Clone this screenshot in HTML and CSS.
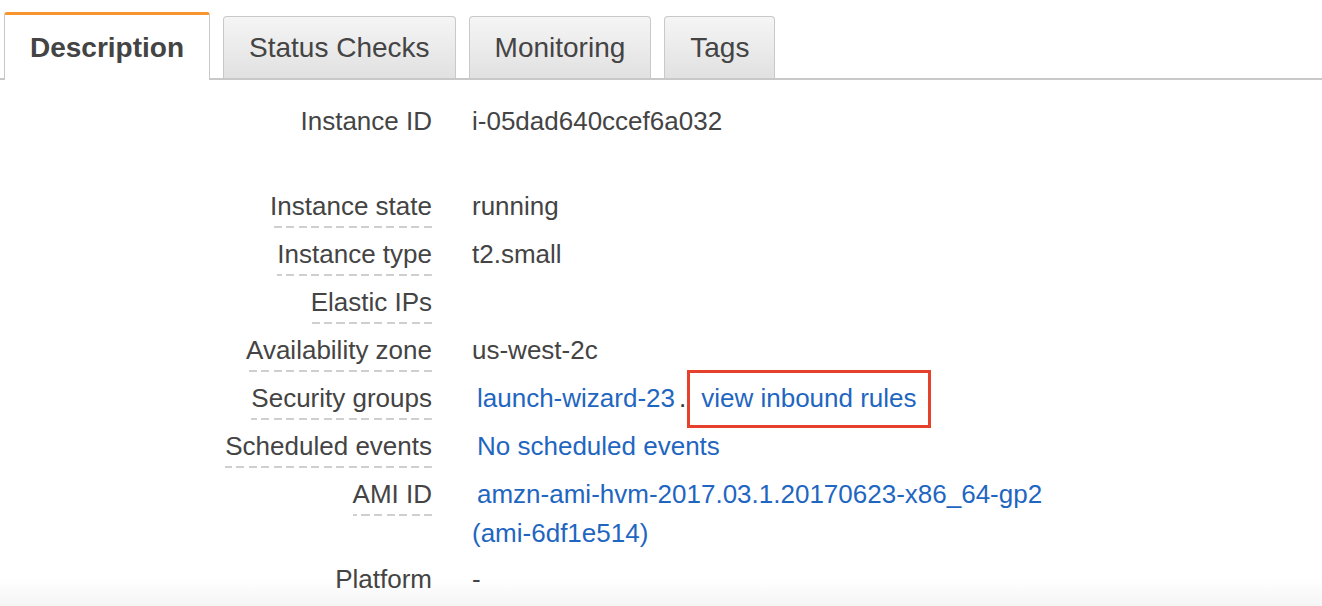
FILE: index.html
```html
<!DOCTYPE html>
<html lang="en">
<head>
  <meta charset="UTF-8" />
  <meta name="viewport" content="width=device-width, initial-scale=1.0"/>
  <title>Instance Description</title>
  <link rel="stylesheet" href="styles.css">
</head>
<body>
  <div class="tabs">
    <div class="tab active">Description</div>
    <div class="tab">Status Checks</div>
    <div class="tab">Monitoring</div>
    <div class="tab">Tags</div>
  </div>

  <div class="details">
    <div class="row first">
      <div class="label">Instance ID</div>
      <div class="value">i-05dad640ccef6a032</div>
    </div>
    <div class="row">
      <div class="label"><span class="tip">Instance state</span></div>
      <div class="value">running</div>
    </div>
    <div class="row">
      <div class="label"><span class="tip">Instance type</span></div>
      <div class="value">t2.small</div>
    </div>
    <div class="row">
      <div class="label"><span class="tip">Elastic IPs</span></div>
      <div class="value"></div>
    </div>
    <div class="row">
      <div class="label"><span class="tip">Availability zone</span></div>
      <div class="value">us-west-2c</div>
    </div>
    <div class="row">
      <div class="label"><span class="tip">Security groups</span></div>
      <div class="value indent"><a href="#">launch-wizard-23</a><span class="dot">.</span><span class="highlight"><a href="#">view inbound rules</a></span></div>
    </div>
    <div class="row">
      <div class="label"><span class="tip">Scheduled events</span></div>
      <div class="value indent"><a href="#">No scheduled events</a></div>
    </div>
    <div class="row">
      <div class="label"><span class="tip">AMI ID</span></div>
      <div class="value indent"><a href="#">amzn-ami-hvm-2017.03.1.20170623-x86_64-gp2<br>(ami-6df1e514)</a></div>
    </div>
    <div class="row">
      <div class="label">Platform</div>
      <div class="value">-</div>
    </div>
  </div>
</body>
</html>
```

FILE: styles.css
```css
html {
  height: 100%;
  background: linear-gradient(#fff 578px, #f5f5f5 606px) no-repeat;
}

body {
  margin: 0;
  font-family: "Liberation Sans", Arial, Helvetica, sans-serif;
  color: #444;
}

a {
  color: #1f66c1;
  text-decoration: none;
}

.tabs {
  display: flex;
  align-items: flex-end;
  gap: 13px;
  height: 78px;
  padding-left: 4px;
  border-bottom: 2px solid #c8c8c8;
}

.tab {
  font-size: 28px;
  line-height: 61px;
  padding: 0 25px;
  border: 1px solid #c9c9c9;
  border-bottom: none;
  border-radius: 4px 4px 0 0;
  background: linear-gradient(#f5f5f5, #e1e1e1);
  color: #444;
}

.tab.active {
  line-height: 65px;
  border-top: 3px solid #f7962f;
  border-radius: 3px 3px 0 0;
  background: #fff;
  font-weight: bold;
  margin-bottom: -2px;
}

.details {
  padding-top: 22px;
}

.row {
  display: grid;
  grid-template-columns: 432px 1fr;
  column-gap: 40px;
  font-size: 26px;
  line-height: 39px;
  margin-bottom: 7px;
}

.row.first { margin-bottom: 46px; }
.row:last-child { margin-bottom: 0; }

.label {
  text-align: right;
}

/* dashed underline, dashes start from the right edge */
.tip {
  display: inline-block;
  padding-bottom: 2px;
  background: repeating-linear-gradient(to left, #cfcfcf 0 8px, transparent 8px 12.5px) bottom / 100% 2px no-repeat;
}

.value.indent {
  text-indent: 5px;
}

.dot {
  margin-left: 4px;
  color: #333;
}

.highlight {
  display: inline-block;
  text-indent: 0;
  border: 3px solid #e5412d;
  padding: 6px 11px 7px;
  margin: -9px 0 -10px 1px;
}
```
